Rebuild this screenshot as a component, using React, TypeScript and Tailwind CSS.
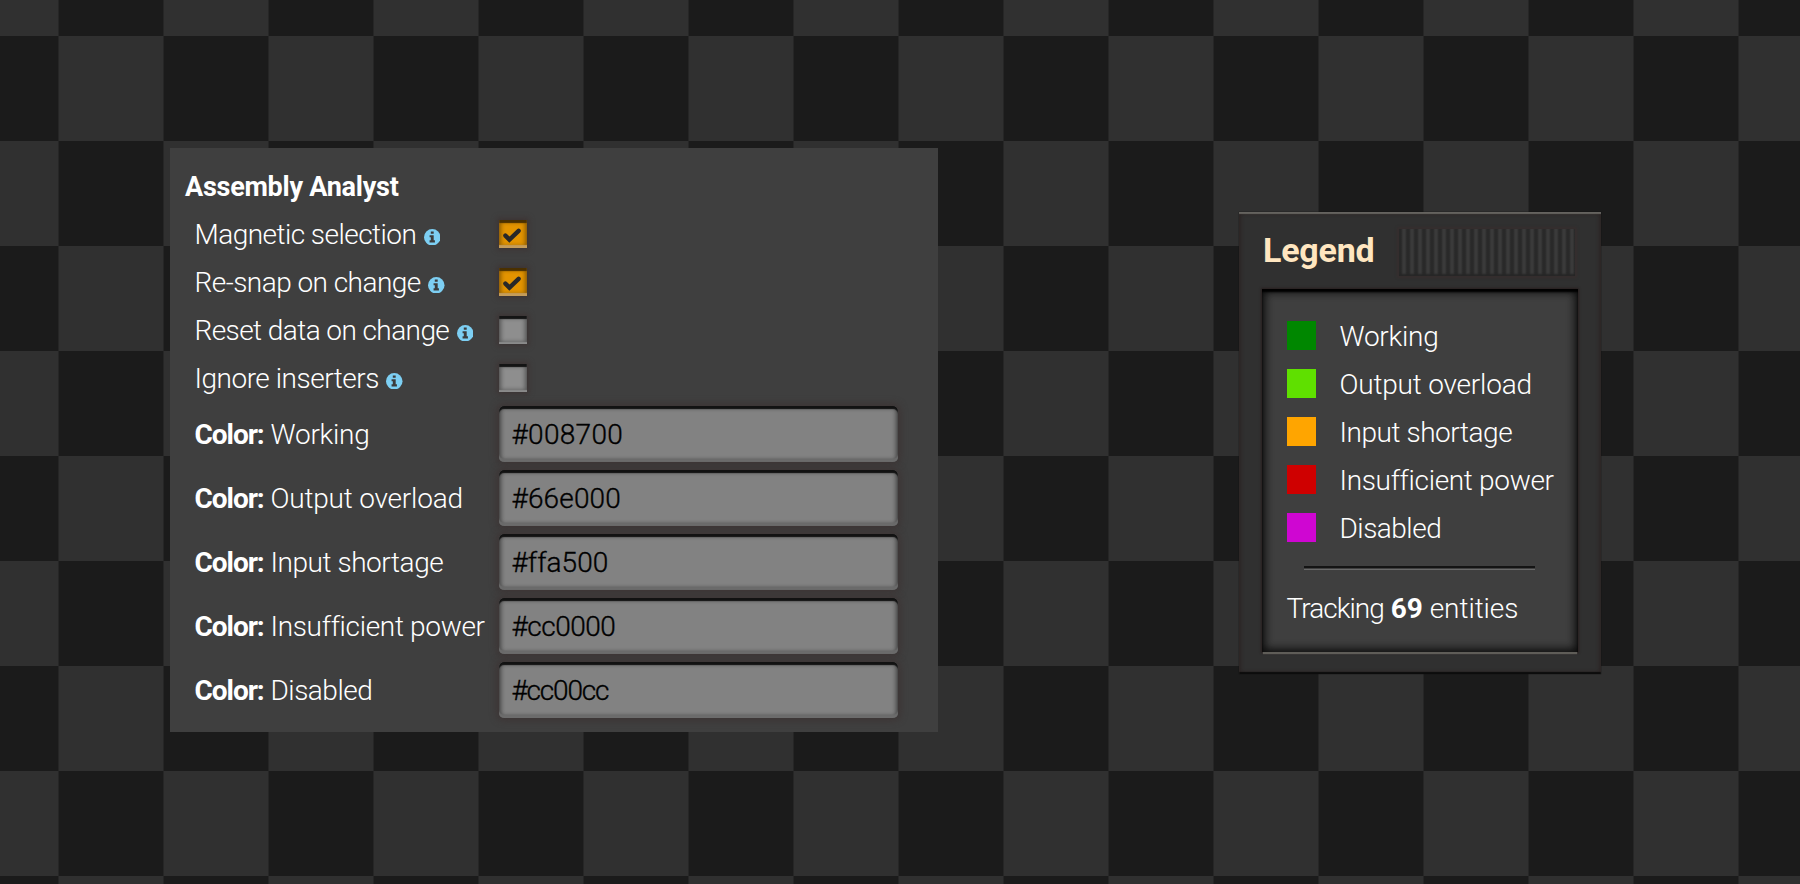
import React from 'react';

const options = [
  { label: 'Magnetic selection', checked: true, spacing: 'tracking-[-0.54px]' },
  { label: 'Re-snap on change', checked: true, spacing: 'tracking-[-0.54px]' },
  { label: 'Reset data on change', checked: false, spacing: 'tracking-[-0.58px]' },
  { label: 'Ignore inserters', checked: false, spacing: 'tracking-[-0.48px]' },
];

const colors = [
  { label: 'Working', spacing: 'tracking-[-0.25px]', value: '#008700', valueSpacing: 'tracking-[0.3px]', swatch: 'bg-[#008700]' },
  { label: 'Output overload', spacing: 'tracking-[-0.2px]', value: '#66e000', valueSpacing: 'tracking-[0.15px]', swatch: 'bg-[#5fe000]' },
  { label: 'Input shortage', spacing: 'tracking-[-0.45px]', value: '#ffa500', valueSpacing: 'tracking-[0.05px]', swatch: 'bg-[#ffa500]' },
  { label: 'Insufficient power', spacing: 'tracking-[-0.32px]', value: '#cc0000', valueSpacing: 'tracking-[-0.5px]', swatch: 'bg-[#cf0000]' },
  { label: 'Disabled', spacing: 'tracking-[-0.5px]', value: '#cc00cc', valueSpacing: 'tracking-[-1.2px]', swatch: 'bg-[#cf06d2]' },
];

function InfoIcon() {
  return (
    <svg viewBox="0 0 16 16" className="mt-1 ml-[7.5px] size-[16.5px] shrink-0">
      <circle cx="8" cy="8" r="8" fill="#7dcff3" />
      <path d="M6.6 2.4h2.8v2.3H6.6zM5.4 6h4v5h1.2v2H5.4v-2h1.2V8H5.4z" fill="#3c3c3c" />
    </svg>
  );
}

function Checkbox({ checked }: { checked: boolean }) {
  return (
    <span
      className={
        checked
          ? 'mb-0.5 flex size-7 items-center justify-center bg-[#e39400] shadow-[inset_0_-3px_1px_#c49c5a,inset_0_3px_1px_#4a3000,inset_0_0_4px_2px_#8a5a00,0_0_5px_2px_#3d3434]'
          : 'mb-0.5 flex size-7 items-center justify-center bg-[#8e8e8e] shadow-[inset_0_-2px_1px_#8a8a8a,inset_0_3px_1px_#141414,inset_0_0_4px_2px_#555555,0_0_5px_2px_#3d3434]'
      }
    >
      {checked && (
        <svg viewBox="0 0 18 16" className="mt-px mr-px h-4 w-[18px]">
          <path d="M2.4 8.6l4 4 9.2-8.8" fill="none" stroke="#282828" strokeWidth="4.4" strokeLinecap="round" />
        </svg>
      )}
    </span>
  );
}

export default function App() {
  return (
    <main className="flex h-[884px] w-[1800px] items-start overflow-hidden bg-[conic-gradient(#1b1b1b_25%,#303030_0_50%,#1b1b1b_0_75%,#303030_0)] bg-size-[210px_210px] bg-position-[-46.5px_-69px] font-['Roboto',sans-serif] text-[28px] leading-none font-light whitespace-nowrap text-white">
      <section className="mt-[148px] ml-[170px] h-[584px] w-[768px] bg-[#3f3f3f] pt-[15px]">
        <h1 className="flex h-12 items-center pl-[15px] text-[27px] font-bold tracking-[-0.25px]">Assembly Analyst</h1>
        {options.map((o) => (
          <div key={o.label} className="flex h-12 items-center pl-[24.5px]">
            <div className="flex w-[304px] items-center">
              <span className={o.spacing}>{o.label}</span>
              <InfoIcon />
            </div>
            <Checkbox checked={o.checked} />
          </div>
        ))}
        {colors.map((c) => (
          <div key={c.label} className="flex h-16 items-center pl-[24.5px]">
            <div className="w-[304.5px]">
              <b className="font-bold tracking-[-1.05px]">Color:</b> <span className={c.spacing}>{c.label}</span>
            </div>
            <div className="mb-0.5 flex h-14 w-[399px] items-center rounded-[5px] bg-[#828282] px-[12.5px] text-black shadow-[inset_0_-3px_1px_#6c6c6c,inset_0_3px_1px_#121212,inset_0_0_4px_2px_#444444,0_0_6px_3px_#3d3636]">
              <span className={`mt-0.5 [-webkit-text-stroke:0.35px_black] ${c.valueSpacing}`}>{c.value}</span>
            </div>
          </div>
        ))}
      </section>
      <aside className="mt-[212px] ml-[301px] h-[462px] w-[362px] bg-[#303030] px-[23px] shadow-[inset_0_2px_1px_#65635f,inset_0_-2px_1px_#0c0c0c,inset_0_0_4px_1px_#281d1d,0_0_1px_#101010]">
        <header className="flex h-[77px] items-center justify-between pr-[3px] pl-px">
          <h2 className="mb-0.5 text-[34px] font-bold tracking-[-0.2px] text-[#ffe6c0]">Legend</h2>
          <div className="mt-[3px] h-[47px] w-[176px] bg-[repeating-linear-gradient(90deg,#292929_0_2px,#303030_3px,#3a3a3a_4px_6px,#303030_7px,#292929_8px)] shadow-[inset_0_-2px_2px_#262626,0_0_2px_2px_#352e2e]" />
        </header>
        <div className="h-[363px] bg-[#3f3f3f] pt-[22px] pl-[24.5px] shadow-[inset_0_3px_2px_#000000,inset_0_0_8px_3px_#0c0c0c,0_3px_1px_-1px_#5f5d58,0_0_2px_1px_#2a2020]">
          {colors.map((c) => (
            <div key={c.label} className="flex h-12 items-center">
              <span className={`mr-[24px] size-[29px] ${c.swatch}`} />
              <span className={`mt-[3px] ${c.spacing}`}>{c.label}</span>
            </div>
          ))}
          <div className="mt-[15px] ml-[17.5px] h-1 w-[231px] border-t-2 border-b border-t-[#141414] border-b-[#6a6a6a] bg-[#3f3f3f]" />
          <p className="mt-[25px]">
            <span className="tracking-[-0.95px]">Tracking</span> <b className="font-bold">69</b>{' '}
            <span className="tracking-[-0.05px]">entities</span>
          </p>
        </div>
      </aside>
    </main>
  );
}
